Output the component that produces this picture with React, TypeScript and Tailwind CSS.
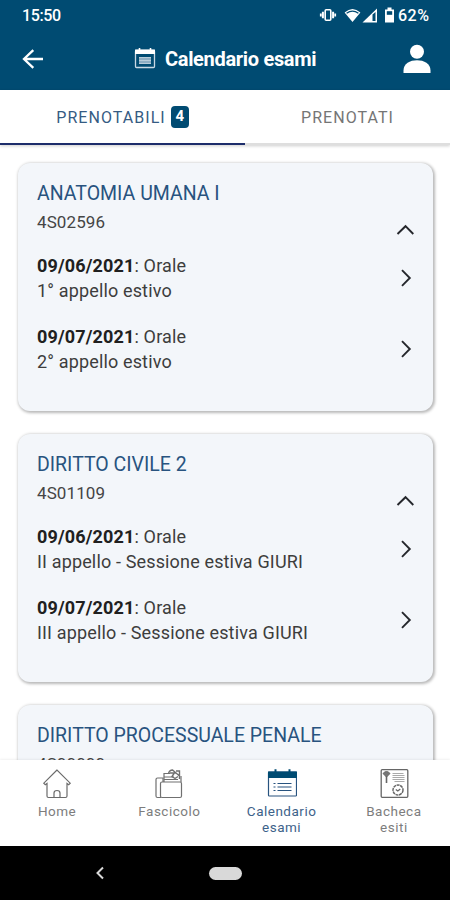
import React from "react";

type Exam = { date: string; kind: string; note: string };
type Course = { name: string; code: string; exams: Exam[] };

const courses: Course[] = [
  {
    name: "ANATOMIA UMANA I",
    code: "4S02596",
    exams: [
      { date: "09/06/2021", kind: "Orale", note: "1° appello estivo" },
      { date: "09/07/2021", kind: "Orale", note: "2° appello estivo" },
    ],
  },
  {
    name: "DIRITTO CIVILE 2",
    code: "4S01109",
    exams: [
      { date: "09/06/2021", kind: "Orale", note: "II appello - Sessione estiva GIURI" },
      { date: "09/07/2021", kind: "Orale", note: "III appello - Sessione estiva GIURI" },
    ],
  },
  { name: "DIRITTO PROCESSUALE PENALE", code: "4S00000", exams: [] },
];

function StatusBar() {
  return (
    <div className="flex h-[30px] items-center justify-between pl-[22px] pr-[20px] text-white">
      <span className="pt-px text-[16px] leading-[30px] font-medium tracking-[-0.4px]">15:50</span>
      <div className="flex items-center">
        <svg width="18" height="14" viewBox="0 0 18 14" className="mr-[7px]" fill="none" stroke="white">
          <rect x="6.200" y="1.800" width="5.600" height="10.400" rx="1" strokeWidth="1.600" />
          <path d="M3.900 3.800v6.400M14.100 3.800v6.400" strokeWidth="2" />
          <path d="M1.800 5.500v3M16.200 5.500v3" strokeWidth="1.800" />
        </svg>
        <svg width="17" height="15" viewBox="0 0 17 15" className="mr-[1px]">
          <path d="M0.600 4.600Q8.500 -2.800 16.400 4.600L8.500 14Z" fill="white" />
          <path d="M2.600 5.300Q8.500 0.800 14.400 5.300" fill="none" stroke="#004b72" strokeWidth="1.300" />
        </svg>
        <svg width="16" height="15" viewBox="0 0 16 15" className="mr-[6px]">
          <path d="M0.500 14.500L15 0.500V14.500Z" fill="white" />
          <path d="M10.500 6.500L13.500 4V13H10.500Z" fill="#004b72" />
        </svg>
        <svg width="11" height="16" viewBox="0 0 11 16" className="mr-[3px]">
          <path d="M3.500 0.500h4v2h2.500v13H1v-13h2.500Z" fill="white" />
          <rect x="2.800" y="4.200" width="5.400" height="3.600" fill="#004b72" />
        </svg>
        <span className="w-[32px] whitespace-nowrap pt-px text-[16px] leading-[30px] font-medium tracking-[0.5px]">62%</span>
      </div>
    </div>
  );
}

function Header() {
  return (
    <header className="h-[90px] shrink-0 bg-[#004b72]">
      <StatusBar />
      <div className="flex h-[58px] items-center pl-[22px] pr-[19px]">
        <svg width="22" height="20" viewBox="0 0 22 20" fill="none" stroke="white" strokeWidth="2.300">
          <path d="M21 10H2M11.300 1.200L2 10l9.300 8.800" />
        </svg>
        <div className="flex flex-1 items-center pl-[90px]">
          <svg width="22" height="21" viewBox="0 0 22 21" className="-mt-[2px]">
            <rect x="1.500" y="2.500" width="19" height="17" rx="1" fill="none" stroke="#c9d9e4" strokeWidth="1.300" />
            <path d="M1 1.500h20V6H1Z" fill="white" />
            <path d="M5.500 0v2M16.500 0v2" stroke="white" strokeWidth="1.600" />
            <rect x="5" y="9" width="12" height="7" fill="#8eaec3" />
            <path d="M5 9.500h12M5 12.500h12M5 15.500h12" stroke="#c3d4e0" strokeWidth="0.800" />
          </svg>
          <h1 className="ml-[9px] whitespace-nowrap text-[20px] font-bold leading-6 tracking-[-0.320px] text-white">
            Calendario esami
          </h1>
        </div>
        <svg width="28" height="30" viewBox="0 0 28 30" fill="white">
          <circle cx="14" cy="7.700" r="7" />
          <path d="M0.500 29v-2.500C0.500 19.500 7 16.300 14 16.300S27.500 19.500 27.500 26.500V29Z" />
        </svg>
      </div>
    </header>
  );
}

function Tabs() {
  return (
    <div className="flex h-[55px] shrink-0 text-[16px] tracking-[1.050px] shadow-[0_1px_3px_rgba(0,0,0,0.2)]">
      <div className="flex w-[245px] items-center justify-center border-b-2 border-[#1d2d6b] text-[#355b83]">
        <span className="pt-[3px]">PRENOTABILI</span>
        <span className="ml-[5px] flex h-[22px] w-[18px] items-center justify-center rounded-[4px] bg-[#004b72] text-[15px] font-bold tracking-normal text-white">
          4
        </span>
      </div>
      <div className="flex flex-1 items-center justify-center border-b-2 border-[#dedede] pt-[3px] text-[#757575]">
        PRENOTATI
      </div>
    </div>
  );
}

function Chevron({ up = false }: { up?: boolean }) {
  return (
    <svg width="20" height="20" viewBox="0 0 20 20" fill="none" stroke="#25272c" strokeWidth="1.900" className="shrink-0">
      {up ? <path d="M2.500 14L10.500 6.200l7.800 7.800" /> : <path d="M7 2.200l7.800 7.800-7.800 7.800" />}
    </svg>
  );
}

function CourseCard({ course }: { course: Course }) {
  return (
    <article className="h-[248px] shrink-0 rounded-[12px] bg-[#f3f6fa] pl-[19px] pr-[18px] pt-[15px] shadow-[1px_1px_3px_1px_rgba(0,0,0,0.28)]">
      <h2 className="whitespace-nowrap text-[19.500px] leading-[31px] text-[#28537f]">{course.name}</h2>
      <div className="flex h-[29px] justify-between">
        <span className="text-[17px] leading-[27px] tracking-[0.100px] text-[#454545]">{course.code}</span>
        <span className="pt-[11px]">
          <Chevron up />
        </span>
      </div>
      <ul className="mt-[15px] flex flex-col gap-[21px]">
        {course.exams.map((exam) => (
          <li key={exam.date} className="flex h-[50px] items-center justify-between text-[18px] leading-[25px] tracking-[0.150px] text-[#3d3d3d]">
            <p className="whitespace-nowrap">
              <b className="font-bold text-[#202020]">{exam.date}</b>: {exam.kind}
              <br />
              {exam.note}
            </p>
            <Chevron />
          </li>
        ))}
      </ul>
    </article>
  );
}

function HomeIcon() {
  return (
    <svg width="30" height="32" viewBox="0 0 30 32" fill="none" stroke="#6b6b6b" strokeWidth="1.200">
      <path d="M15 2L1.800 15.200l1.500 1.600L5 15.500V28q0 1.500 1.500 1.500h17q1.500 0 1.500-1.500V15.500l1.700 1.300 1.500-1.600Z" />
      <path d="M12 29.500V25q0-2.500 3-2.500t3 2.500v4.500" />
    </svg>
  );
}

function FolderIcon() {
  return (
    <svg width="30" height="32" viewBox="0 0 30 32" fill="none" stroke="#707070" strokeWidth="1.200">
      <path d="M7 29.500H3.500Q2 29.500 2 28V11.500Q2 10 3.500 10H9v4" />
      <rect x="6.500" y="14" width="21" height="15.500" rx="1.500" />
      <path d="M10 14V5.500h6M10 9h10M10 11.500h14M27 14V8" />
      <path d="M14.500 5.500q1-3.500 4-3.500l7 6M16 5h6M20 5.500l-2 3 3 2 3-2M22 3h3.500v8" strokeWidth="1.400" />
    </svg>
  );
}

function CalendarIcon() {
  return (
    <svg width="30" height="32" viewBox="0 0 30 32" fill="none" stroke="#28537f">
      <rect x="1.500" y="4" width="28" height="24" rx="0.800" strokeWidth="1.200" />
      <path d="M1 3.500h29V10H1Z" fill="#004b72" stroke="none" />
      <path d="M8.500 1.200v3M22.500 1.200v3" stroke="#004b72" strokeWidth="2" />
      <path d="M6.500 15.500h2M6.500 19h2M6.500 22.500h2M10.500 15.500h14M10.500 19h14M10.500 22.500h14" strokeWidth="1.200" />
    </svg>
  );
}

function BoardIcon() {
  return (
    <svg width="30" height="32" viewBox="0 0 30 32" fill="none" stroke="#666">
      <rect x="2.200" y="1.700" width="26.600" height="27.600" rx="1" strokeWidth="1.300" />
      <path d="M4 5.500Q7.500 1.500 11 5.500L7.500 9Z" fill="#777" strokeWidth="1" />
      <path d="M7.500 8v7" strokeWidth="1.600" />
      <path d="M13.500 5.500h11M13.500 7.500h12M13.500 9.500h12M13.500 11.500h12M15.500 13.500h10" stroke="#aaa" strokeWidth="1.100" />
      <circle cx="19" cy="22" r="5" strokeWidth="1.500" strokeDasharray="3 0.600" />
      <path d="M16.800 21.500l2 1.500 2.500-2" strokeWidth="1.300" />
    </svg>
  );
}

const navItems = [
  { label: ["Home"], icon: <HomeIcon />, active: false },
  { label: ["Fascicolo"], icon: <FolderIcon />, active: false },
  { label: ["Calendario", "esami"], icon: <CalendarIcon />, active: true },
  { label: ["Bacheca", "esiti"], icon: <BoardIcon />, active: false },
];

export default function App() {
  return (
    <div className="flex h-[900px] w-[450px] flex-col overflow-hidden bg-white font-[Roboto,sans-serif]">
      <Header />
      <Tabs />
      <main className="flex h-[615px] shrink-0 flex-col gap-[23px] overflow-hidden pl-[18px] pr-[17px] pt-[18px]">
        {courses.map((course) => (
          <CourseCard key={course.name} course={course} />
        ))}
      </main>
      <nav className="grid h-[86px] shrink-0 grid-cols-4 bg-white pt-[8px] pl-px shadow-[0_-1px_2px_rgba(0,0,0,0.06)]">
        {navItems.map((item) => (
          <div key={item.label[0]} className="flex flex-col items-center">
            {item.icon}
            <div
              className={
                item.active
                  ? "mt-[3px] text-center text-[13.500px] leading-[16px] tracking-[0.500px] text-[#3d628a]"
                  : "mt-[3px] text-center text-[13.500px] leading-[16px] tracking-[0.500px] text-[#7d7d7d]"
              }
            >
              {item.label.map((line) => (
                <div key={line}>{line}</div>
              ))}
            </div>
          </div>
        ))}
      </nav>
      <footer className="flex h-[54px] shrink-0 items-center bg-black pl-[95px]">
        <svg width="10" height="14" viewBox="0 0 10 14" fill="none" stroke="#d8d8d8" strokeWidth="2">
          <path d="M8 1.500L2.500 7 8 12.500" />
        </svg>
        <div className="ml-[104px] h-[13px] w-[33px] rounded-full bg-[#d9d9d9]" />
      </footer>
    </div>
  );
}
